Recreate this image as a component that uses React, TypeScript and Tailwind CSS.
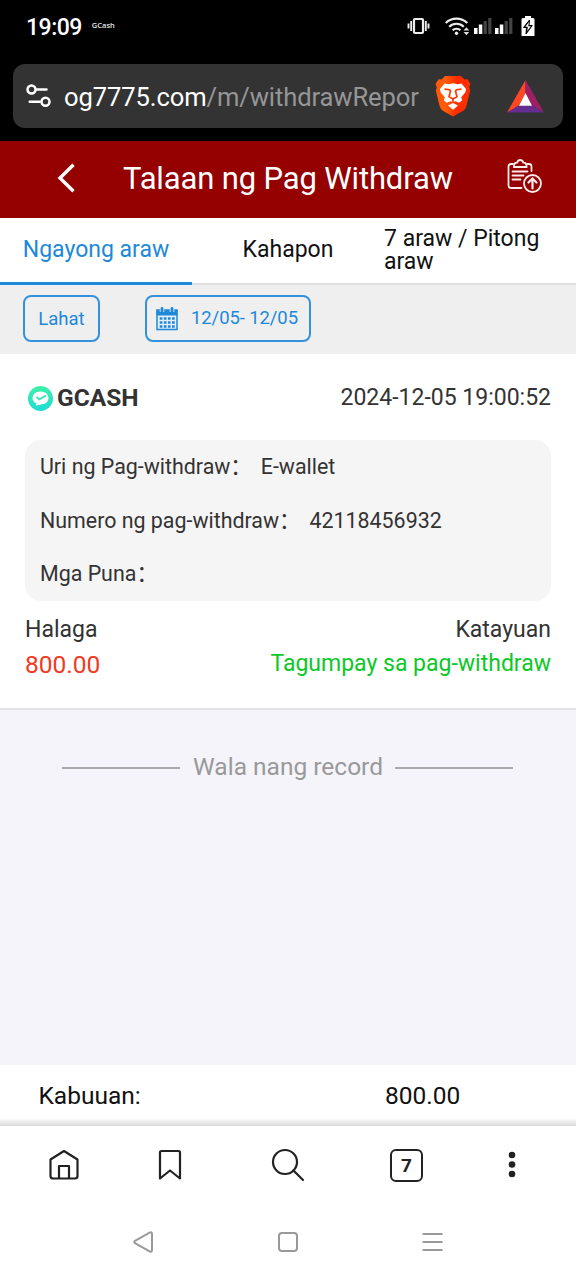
import type { ReactNode } from "react";

function SignalBars({ className = "" }: { className?: string }) {
  return (
    <svg className={className} width="18" height="18" viewBox="0 0 18 18">
      <rect x="0" y="11" width="3.5" height="6" fill="#fff" />
      <rect x="4.8" y="7.5" width="3.5" height="9.5" fill="#fff" />
      <rect x="9.6" y="4" width="3.2" height="13" fill="#444" />
      <rect x="14.2" y="1" width="3.2" height="16" fill="#444" />
    </svg>
  );
}

function StatusBar() {
  return (
    <div className="flex h-16 items-start justify-between pl-[26px] pr-[41px]">
      <div className="flex h-[54px] items-center">
        <span className="text-[23px] font-medium leading-none tracking-[-0.5px] text-white">19:09</span>
        <span className="mb-[3px] ml-[10px] font-['Open_Sans'] text-[7.5px] font-semibold leading-none text-gray-200">
          GCash
        </span>
      </div>
      <div className="flex h-[51px] items-center">
        <svg width="24" height="18" viewBox="0 0 24 18" fill="none" stroke="#eee" strokeWidth="2.2">
          <rect x="7" y="2" width="9" height="14" rx="1" />
          <path d="M4.200 4v10M1.500 6.500v5M18.800 4v10M21.500 6.500v5" strokeWidth="1.900" />
        </svg>
        <svg className="ml-[14px]" width="26" height="20" viewBox="0 0 26 20" fill="none" stroke="#eee" strokeWidth="2.2">
          <path d="M.7 7a15.500 15.500 0 0 1 21.600 0M4.200 10.700a10.500 10.500 0 0 1 14.600 0M7.600 14.200a6 6 0 0 1 7.800 0" />
          <circle cx="11.500" cy="17.200" r="1.700" fill="#eee" stroke="none" />
          <path d="M18.500 14.500l2.900-3.200 2.900 3.200zM18.500 16l2.900 3.200 2.900-3.200z" fill="#ddd" stroke="none" />
        </svg>
        <SignalBars className="ml-[3px]" />
        <SignalBars className="ml-[3px]" />
        <svg className="ml-[8px]" width="14" height="22" viewBox="0 0 14 22">
          <path d="M4 1h6v2h2q1.500 0 1.500 1.500V21H.5V4.500Q.5 3 2 3h2z" fill="#fff" />
          <path d="M8.500 5L2.500 12.500h3L5 19l6.300-8.500H8z" fill="#000" stroke="#000" />
          <path d="M8 7l-3.700 4.700h2.500L6.300 16l3.500-4.700H7.200z" fill="#fff" />
        </svg>
      </div>
    </div>
  );
}

function BraveLion() {
  return (
    <svg width="36" height="42" viewBox="0 0 36 42">
      <defs>
        <linearGradient id="brave" x1="0" x2="1">
          <stop offset="0.3" stopColor="#ff5a0a" />
          <stop offset="0.6" stopColor="#ff2d00" />
        </linearGradient>
      </defs>
      <path
        d="M10 1h16l3.500 3.600 3-.3L35.500 9l-1.300 3 1 3.500-3.800 15.500q-.8 3-3.200 4.800L18 41.500 7.800 35.800q-2.400-1.800-3.200-4.800L.8 15.500l1-3L.5 9l3-4.700 3 .3z"
        fill="url(#brave)"
      />
      <path
        d="M9.500 8.500l4 .8 4.500-1 4.500 1 4-.8 4.500 5.500-.6 3.300-4.200 5 1 3.200-3.200 2.300-3.500-1.600L18 27l-2.500-.8-3.500 1.600-3.200-2.300 1-3.200-4.200-5L5 14z"
        fill="#fff"
      />
      <path d="M18 28l5 2.500-5 4.300-5-4.300z" fill="#fff" />
      <path
        d="M9.500 14.200l5 .5 1 1.500-1.500 5.500 4 2.300 4-2.300-1.500-5.500 1-1.500 5-.5M18 24v3.500"
        fill="none"
        stroke="#fb3a02"
        strokeWidth="1.700"
      />
    </svg>
  );
}

function AddressBar() {
  return (
    <div className="mx-[13px] flex h-16 items-center rounded-xl bg-[#333] pl-[13px]">
      <svg width="26" height="24" viewBox="0 0 26 24" fill="none" stroke="#fff" strokeWidth="2.500" strokeLinecap="round">
        <circle cx="5.500" cy="5.500" r="4" />
        <path d="M10.500 5.500h10M3.700 17.700h10" />
        <circle cx="19.500" cy="17.700" r="4" />
      </svg>
      <div className="ml-[12px] mt-px w-[358px] whitespace-nowrap text-[25.600px] leading-8 tracking-[-0.120px] text-white">
        og7775.com<span className="text-[#969696]">/m/withdrawRepor</span>
      </div>
      <div className="ml-[13px]">
        <BraveLion />
      </div>
      <svg className="ml-[36px]" width="37" height="33" viewBox="0 0 37 33">
        <path d="M18.500 0L0 32.500l12-7 6.500-12z" fill="#ff4724" />
        <path d="M18.500 0L37 32.500l-12-7-6.500-12z" fill="#9e1f63" />
        <path d="M0 32.500h37l-12-7H12z" fill="#662d91" />
        <path d="M18.500 13L12 25.700h13z" fill="#fff" />
      </svg>
    </div>
  );
}

function PageHeader() {
  return (
    <div className="mt-[13px] flex h-[76.500px] items-center bg-[#950000] text-white">
      <svg className="-mt-[2px] ml-[57px]" width="19" height="30" viewBox="0 0 19 30" fill="none" stroke="#fff" strokeWidth="3.400">
        <path d="M16.500 1.800L3 15l13.500 13.200" />
      </svg>
      <h1 className="-mt-px ml-[47px] w-[332px] whitespace-nowrap text-[31px] leading-9 tracking-[-0.150px]">
        Talaan ng Pag Withdraw
      </h1>
      <svg
        className="-mt-[6px] ml-[52px]"
        width="36"
        height="34"
        viewBox="0 0 36 34"
        fill="none"
        stroke="#fbeaea"
        strokeWidth="1.800"
        strokeLinecap="round"
      >
        <path d="M6 5H4Q1.500 5 1.500 7.500v19Q1.500 29 4 29h10.500M20.500 5H22q2.500 0 2.500 2.500V12" />
        <path d="M7 8V6.500q0-2.500 3-2.800Q11 1 13.200 1t3.200 2.700q3.100.3 3.100 2.800V8z" />
        <path d="M5.500 12.500h15M5.500 16.500h11M5.500 20.500h8" />
        <circle cx="25.500" cy="24.500" r="8.500" />
        <path d="M25.500 29.500V20M21.500 23.500l4-4 4 4" strokeWidth="2.200" />
      </svg>
    </div>
  );
}

function Tabs() {
  return (
    <div className="grid h-[67.500px] grid-cols-3 bg-white text-[23px] leading-[23px] text-[#111]">
      <div className="flex items-center justify-center border-b-[3px] border-[#1e88da] text-[#1e88da]">
        Ngayong araw
      </div>
      <div className="flex items-center justify-center border-b-2 border-[#dedede] pb-px">Kahapon</div>
      <div className="flex items-center border-b-2 border-[#dedede]">
        <span>
          7 araw / Pitong
          <br />
          araw
        </span>
      </div>
    </div>
  );
}

function Filters() {
  return (
    <div className="flex h-[69px] items-start bg-[#efefef] pl-[23px] pt-[10px] text-[18.500px] text-[#1e88da]">
      <button className="h-[47px] w-[77px] rounded-lg border-2 border-[#3492dc] pt-[2px]">Lahat</button>
      <button className="ml-[45px] flex h-[47px] w-[166px] items-center rounded-lg border-2 border-[#3492dc] pl-[9px]">
        <svg width="22" height="24" viewBox="0 0 22 24">
          <path d="M1 3h20v19.500H1z" fill="#e7eff6" stroke="#1e88da" strokeWidth="1.500" />
          <path d="M.5 3h21v5.500H.5z" fill="#1e88da" />
          <path d="M6 0v5M16 0v5" stroke="#efefef" strokeWidth="4.500" />
          <path d="M6 1.500v3M16 1.500v3" stroke="#1e88da" strokeWidth="2.800" strokeLinecap="round" />
          <path d="M3.700 11.500h15M3.700 15.500h15M3.700 19.500h15" stroke="#1e88da" strokeWidth="2.400" strokeDasharray="2.700 1.400" />
        </svg>
        <span className="ml-[13px] whitespace-nowrap tracking-[-0.100px]">12/05- 12/05</span>
      </button>
    </div>
  );
}

function DetailRow({ label, children }: { label: string; children?: ReactNode }) {
  return (
    <div className="flex h-[53.500px] items-center whitespace-nowrap pt-px">
      <span className="font-['Roboto','Noto_Sans_CJK_SC',sans-serif] leading-[26px]">{label}：</span>
      <span className="ml-[9px] leading-[26px]">{children}</span>
    </div>
  );
}

function RecordCard() {
  return (
    <div className="h-[356px] border-b-2 border-[#e4e4e6] bg-white px-[25px] text-[#333]">
      <div className="flex h-[86px] items-center justify-between pt-px">
        <div className="flex items-center pl-[3px] pt-px">
          <svg width="25" height="25" viewBox="0 0 25 25">
            <defs>
              <linearGradient id="wallet" x1="0" y1="0" x2="0" y2="1">
                <stop offset="0" stopColor="#3df0a5" />
                <stop offset="1" stopColor="#21dbd5" />
              </linearGradient>
            </defs>
            <circle cx="12.500" cy="12.500" r="12.500" fill="url(#wallet)" />
            <path d="M12.500 5.500c4.500 0 8 2.800 8 6.500s-3.500 6.500-8 6.500l-4.500 1 .3-2C5.800 16.500 4.500 14.500 4.500 12c0-3.700 3.500-6.500 8-6.500z" fill="#fff" />
            <path d="M8.500 11l3 2.300L18 9.500" fill="none" stroke="#35e5b5" strokeWidth="1.800" />
          </svg>
          <span className="ml-[4px] text-[24.500px] font-bold">GCASH</span>
        </div>
        <span className="pt-[2px] text-[23px]">2024-12-05 19:00:52</span>
      </div>
      <div className="h-[161px] rounded-[16px] bg-[#f5f5f5] pl-[15px] text-[21.400px]">
        <DetailRow label="Uri ng Pag-withdraw">E-wallet</DetailRow>
        <DetailRow label="Numero ng pag-withdraw">42118456932</DetailRow>
        <DetailRow label="Mga Puna" />
      </div>
      <div className="flex justify-between pt-[11px]">
        <div>
          <p className="text-[23px] leading-[36px]">Halaga</p>
          <p className="text-[24.500px] leading-[33px] text-[#f03a24]">800.00</p>
        </div>
        <div className="text-right text-[23px]">
          <p className="leading-[36px]">Katayuan</p>
          <p className="leading-[32px] text-[#0cc828]">Tagumpay sa pag-withdraw</p>
        </div>
      </div>
    </div>
  );
}

function BrowserNav() {
  return (
    <div className="grid h-[78px] grid-cols-[128px_83px_154px_83px_128px] items-center justify-items-center bg-white">
      <svg width="32" height="32" viewBox="0 0 32 32" fill="none" stroke="#222" strokeWidth="2.200" strokeLinejoin="round">
        <path d="M2.500 10.500L16 2l13.500 8.500V27q0 2.500-2.500 2.500H5q-2.500 0-2.500-2.500z" />
        <path d="M11 29V17h10v12" />
      </svg>
      <svg width="24" height="32" viewBox="0 0 24 32" fill="none" stroke="#222" strokeWidth="2.200" strokeLinejoin="round">
        <path d="M2 3.500Q2 2 3.500 2h17Q22 2 22 3.500v26l-10-8-10 8z" />
      </svg>
      <svg width="34" height="34" viewBox="0 0 34 34" fill="none" stroke="#222" strokeWidth="2.200" strokeLinecap="round">
        <circle cx="14" cy="14" r="12" />
        <path d="M22.500 22.500L32 32" />
      </svg>
      <div className="flex h-[33px] w-[33px] items-center justify-center rounded-[6px] border-[2.500px] border-[#222] text-[19px] font-bold leading-none text-[#222]">
        7
      </div>
      <svg width="8" height="28" viewBox="0 0 8 28" fill="#222">
        <circle cx="4" cy="4" r="3.300" />
        <circle cx="4" cy="13.500" r="3.300" />
        <circle cx="4" cy="23" r="3.300" />
      </svg>
    </div>
  );
}

function SystemNav() {
  return (
    <div className="flex h-[76px] items-center justify-center gap-[124px] bg-white">
      <svg width="21" height="22" viewBox="0 0 21 22" fill="none" stroke="#999" strokeWidth="2">
        <path d="M2 9.800L17 1.500Q19 .8 19 3v16q0 2.200-2 1.500L2 12.200q-1.500-1.200 0-2.400z" />
      </svg>
      <div className="h-[20px] w-[20px] rounded-[4px] border-2 border-[#999]" />
      <svg width="21" height="20" viewBox="0 0 21 20" stroke="#999" strokeWidth="2">
        <path d="M.5 2h20M.5 10h20M.5 18h20" />
      </svg>
    </div>
  );
}

export default function App() {
  return (
    <div className="flex h-[1280px] w-[576px] flex-col overflow-hidden bg-black font-['Roboto',sans-serif]">
      <StatusBar />
      <AddressBar />
      <PageHeader />
      <Tabs />
      <Filters />
      <RecordCard />
      <div className="flex flex-1 items-start bg-[#f4f4fa] pl-[62px] pt-[39px]">
        <div className="flex items-center text-[24.500px] leading-9 text-[#999]">
          <span className="mt-[2px] h-[2px] w-[118px] bg-[#aaa]" />
          <span className="ml-[13px] mr-[12px] whitespace-nowrap">Wala nang record</span>
          <span className="mt-[2px] h-[2px] w-[118px] bg-[#aaa]" />
        </div>
      </div>
      <div className="flex h-[61px] items-center bg-white pl-[38.500px] pt-[2px] text-[24.500px] text-[#111]">
        <span className="w-[346.500px]">Kabuuan:</span>
        <span>800.00</span>
      </div>
      <div className="-mt-[8px] h-[8px] bg-linear-to-b from-transparent to-black/15" />
      <BrowserNav />
      <SystemNav />
    </div>
  );
}
